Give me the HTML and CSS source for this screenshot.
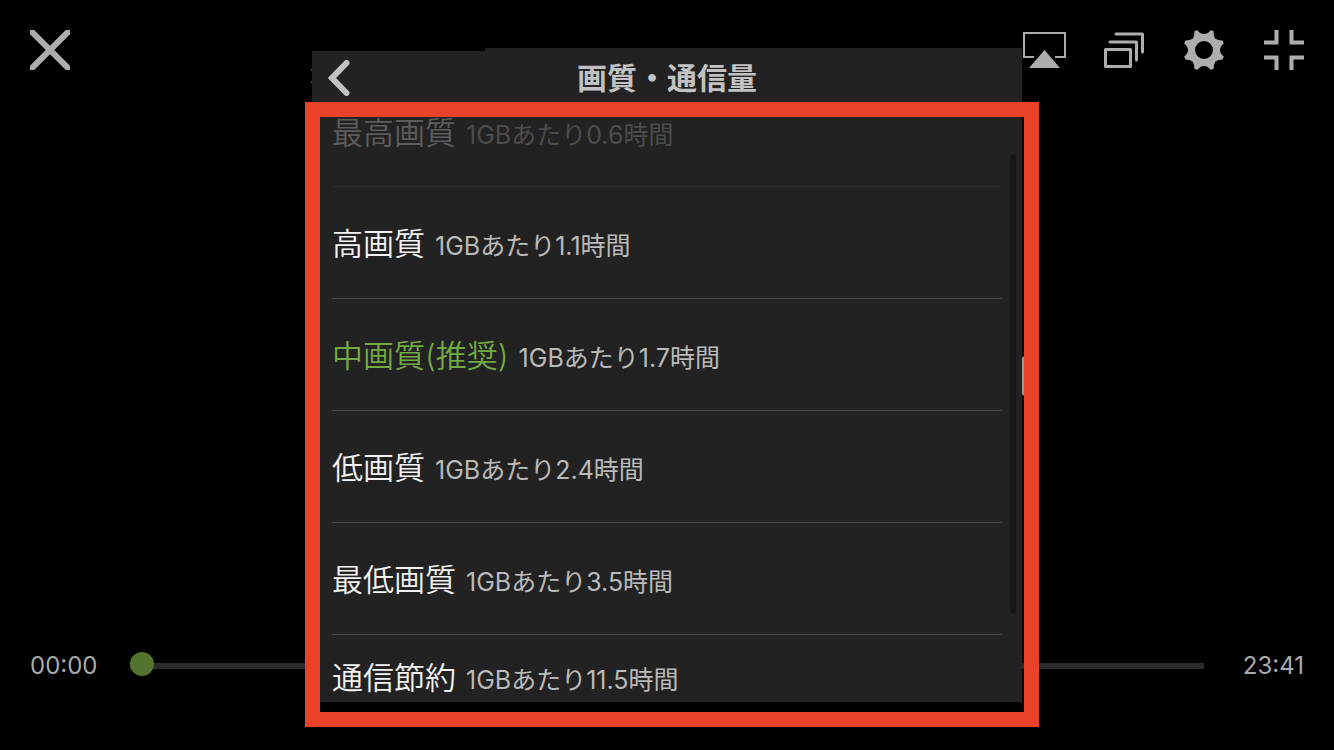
FILE: index.html
```
<!DOCTYPE html>
<html lang="ja">
    <head>
        <meta charset="utf-8">
        <title>画質・通信量</title>
        <link rel="stylesheet" href="styles.css">
    </head>
    <body>
        <div class="player">
            <div class="toolbar">
                <button class="icon-button close" aria-label="閉じる">
                    <svg width="40" height="40" viewBox="0 0 40 40"><path d="M2 2L38 38M38 2L2 38" stroke="currentColor" stroke-width="6" stroke-linecap="round"/></svg>
                </button>
                <button class="icon-button" aria-label="AirPlay">
                    <svg width="42" height="40" viewBox="0 0 42 40" overflow="visible"><path d="M12 27H2V3H43V27H33" fill="none" stroke="currentColor" stroke-width="2"/><path d="M22.500 20L38 38H7Z" fill="currentColor"/></svg>
                </button>
                <button class="icon-button" aria-label="小窓で再生">
                    <svg width="40" height="40" viewBox="0 0 40 40" fill="none" stroke="currentColor" stroke-width="3" stroke-linecap="round" stroke-linejoin="round"><rect x="1.500" y="19.500" width="25" height="17"/><path d="M6 12H32.500V30M12 4H38.500V22"/></svg>
                </button>
                <button class="icon-button" aria-label="設定">
                    <svg width="40" height="40" viewBox="0 0 40 40" fill="currentColor"><path fill-rule="evenodd" d="M10.500 1L13.500 0.200Q16 4 20 4T26.500 0.200L29.500 1Q29.500 5.500 31 8.500Q34 10.500 38.500 10.500L39.800 13.500Q36 16.500 36 20T39.800 26.500L38.500 29.500Q34.500 29.500 31.500 31.500Q29.500 34.500 29.500 39L26.500 39.800Q24 36 20 36T13.500 39.800L10.500 39Q10.500 34.500 8.500 31.500Q5.500 29.500 1.500 29.500L0.200 26.500Q4 23.500 4 20T0.200 13.500L1.500 10.500Q6 10.500 9 8.500Q10.500 5.500 10.500 1ZM20 11A9 9 0 1 0 20 29A9 9 0 1 0 20 11Z"/></svg>
                </button>
                <button class="icon-button" aria-label="全画面を終了">
                    <svg width="40" height="40" viewBox="0 0 40 40"><path d="M12.500 0V12.500H0M27.500 0V12.500H40M12.500 40V27.500H0M27.500 40V27.500H40" fill="none" stroke="currentColor" stroke-width="4"/></svg>
                </button>
            </div>
            <div class="seek">
                <span class="time">00:00</span>
                <input class="seek-bar" type="range" min="0" max="1421" value="0" aria-label="再生位置">
                <span class="time time-total">23:41</span>
            </div>
        </div>

        <div class="panel">
            <div class="panel-header">
                <button class="back" aria-label="戻る">
                    <svg width="22" height="36" viewBox="0 0 22 36"><path d="M18.500 3L4 18L18.500 33" fill="none" stroke="currentColor" stroke-width="6" stroke-linecap="round"/></svg>
                </button>
                <h1>画質・通信量</h1>
            </div>
            <div class="quality-list">
                <button class="quality disabled" disabled><span class="name">最高画質</span><span class="rate">1GBあたり0.6時間</span></button>
                <button class="quality"><span class="name">高画質</span><span class="rate">1GBあたり1.1時間</span></button>
                <button class="quality selected"><span class="name">中画質(推奨)</span><span class="rate">1GBあたり1.7時間</span></button>
                <button class="quality"><span class="name">低画質</span><span class="rate">1GBあたり2.4時間</span></button>
                <button class="quality"><span class="name">最低画質</span><span class="rate">1GBあたり3.5時間</span></button>
                <button class="quality last"><span class="name">通信節約</span><span class="rate">1GBあたり11.5時間</span></button>
            </div>
            <div class="scroll-thumb"></div>
            <div class="side-handle"></div>
            <div class="highlight"></div>
        </div>
    </body>
</html>
```
FILE: styles.css
```
* {
    box-sizing: border-box;
}
body {
    margin: 0;
    background: #000;
    color: #aaa;
    font-family: Inter, "Noto Sans CJK JP", sans-serif;
}
button {
    border: 0;
    padding: 0;
    background: none;
    color: inherit;
    font: inherit;
    text-align: left;
}
svg {
    display: block;
}
.player {
    display: flex;
    flex-direction: column;
    justify-content: space-between;
    min-height: 100vh;
    padding: 30px 30px 68px;
}
.toolbar {
    display: flex;
    gap: 40px;
}
.icon-button {
    color: #adadad;
}
.close {
    margin-right: auto;
}
.seek {
    display: flex;
    align-items: center;
    font-size: 24px;
    line-height: 32px;
}
.time {
    width: 100px;
    padding-top: 4px;
}
.time-total {
    text-align: right;
}
.seek-bar {
    flex: 1;
    height: 24px;
    margin: 0;
    appearance: none;
    background: linear-gradient(#2c2c2c, #2c2c2c) 0 11px / 100% 6px no-repeat;
}
.seek-bar::-webkit-slider-thumb {
    appearance: none;
    width: 24px;
    height: 24px;
    border-radius: 50%;
    background: #51742f;
}

/* settings panel, centered over the player */
.panel {
    position: absolute;
    top: 50%;
    left: 50%;
    transform: translate(-50%, -50%);
    width: 710px;
    max-width: 100%;
    background: #222;
}
.panel::before {
    content: "";
    position: absolute;
    top: 0;
    left: 0;
    width: 173px;
    height: 3px;
    background: #000;
}
/* edge of the label under the panel */
.panel::after {
    content: "";
    position: absolute;
    top: 21px;
    right: 100%;
    width: 1px;
    height: 10px;
    border: solid #555;
    border-width: 2px 0;
}
.panel-header {
    display: grid;
    grid-template-columns: 40px 1fr 40px;
    align-items: center;
    height: 60px;
    padding: 0 16px;
    color: #c2c2c2;
}
.panel-header h1 {
    margin: 0;
    font-size: 30px;
    line-height: 60px;
    text-align: center;
}
.quality-list {
    display: flex;
    flex-direction: column;
    padding: 0 20px;
}
.quality {
    display: flex;
    align-items: baseline;
    gap: 10px;
    height: 112px;
    padding: 32px 0;
    border-bottom: 1px solid #484848;
    line-height: 50px;
    white-space: nowrap;
}
.name {
    color: #f2f2f2;
    font-size: 31px;
    font-weight: 350;
}
.rate {
    color: #bababa;
    font-size: 25px;
    font-weight: 400;
}
.selected .name {
    color: #73a942;
}
.disabled {
    height: 79px;
    padding: 0;
    border-color: #2c2c2c;
}
.disabled .name {
    color: #5c5c5c;
}
.disabled .rate {
    color: #4c4c4c;
}
.last {
    height: 67px;
    padding: 18px 0 0;
    border: 0;
}
.scroll-thumb {
    position: absolute;
    top: 106px;
    right: 6px;
    bottom: 88px;
    width: 6px;
    border-radius: 3px;
    background: #171717;
}
.side-handle {
    position: absolute;
    top: 308px;
    left: 100%;
    width: 4px;
    height: 40px;
    border-radius: 3px 0 0 3px;
    background: #999;
}

/* red box around the options */
.highlight {
    position: absolute;
    top: 54px;
    right: -17px;
    bottom: -25px;
    left: -7px;
    border: 15px solid #ea4228;
    pointer-events: none;
}
```
